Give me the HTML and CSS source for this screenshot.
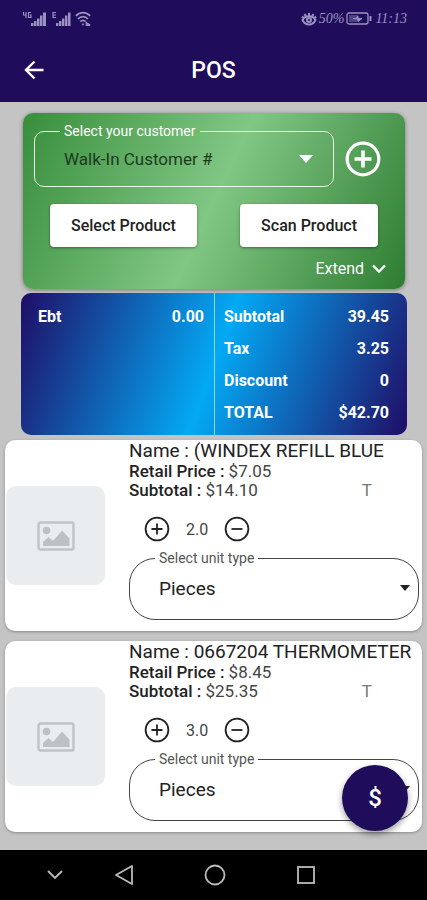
FILE: index.html
```html
<!DOCTYPE html>
<html lang="en">
<head>
<meta charset="utf-8">
<meta name="viewport" content="width=device-width, initial-scale=1">
<title>POS</title>
<link rel="stylesheet" href="styles.css">
</head>
<body>
<header class="top">
  <div class="status">
    <div class="status-group">
      <svg width="24" height="16" viewBox="0 0 24 16" fill="currentColor" aria-hidden="true"><path d="M3 1v6M.5 1v3h3M8 1.500H5.500v5H8V4H7" fill="none" stroke="currentColor" stroke-width="1.200"/><path d="M8 12h2.500v3H8zM11 10h2.500v5H11zM14 7.500h2.500V15H14zM17 4.500h2.500V15H17zM20 1.500h3V15h-3z"/></svg>
      <svg width="20" height="16" viewBox="0 0 20 16" fill="currentColor" aria-hidden="true"><path d="M5 1.500H2v5h3M2 4h3" fill="none" stroke="currentColor" stroke-width="1.200"/><path d="M5 12h2.400v3H5zM8 10h2.400v5H8zM11 7.500h2.400V15H11zM14 4.500h2.400V15H14zM17 1.500h2.500V15H17z"/></svg>
      <svg width="16" height="16" viewBox="0 0 18 18" fill="none" stroke="currentColor" stroke-width="2" aria-hidden="true"><path d="M1 5.500c4.500-5 11.500-5 16 0M3.500 9c3-3.500 8-3.500 11 0M6 12c2-2 4-2 6 0M8 15h2M12 13l5 3M12 16h5"/></svg>
    </div>
    <div class="status-group status-text">
      <svg width="16" height="16" viewBox="0 0 16 16" fill="none" stroke="currentColor" stroke-width="2" aria-hidden="true"><path d="M1.500 9c3-5 10-5 13 0-3 6-10 6-13 0zM8 2v3M3.500 3l1.500 2.500M12.500 3L11 5.500M1 5.500L2.500 7M15 5.500L13.500 7"/><circle cx="8" cy="9" r="2"/></svg>
      <span>50%</span>
      <svg width="27" height="14" viewBox="0 0 27 14" fill="none" stroke="currentColor" aria-hidden="true"><rect x="1" y="1" width="21" height="11" rx="2" stroke-width="1.300"/><rect x="3" y="3" width="9" height="7" fill="currentColor" stroke="none" opacity=".4"/><path d="M24.500 4v5" stroke-width="2"/><path d="M7 6.500h3L12 4v2.500h4L12 9.500V7z" fill="currentColor"/></svg>
      <span>11:13</span>
    </div>
  </div>
  <div class="appbar">
    <button class="icon-btn" type="button" aria-label="Back"><svg width="20" height="20" viewBox="0 0 20 20" fill="none" stroke="currentColor" stroke-width="2.400" aria-hidden="true"><path d="M19.500 10H2M10.500 1.500L2 10l8.500 8.500"/></svg></button>
    <h1>POS</h1>
  </div>
</header>

<main>
  <section class="customer">
    <div class="customer-row">
      <fieldset class="field field-light">
        <legend><label for="customer">Select your customer</label></legend>
        <div class="picker">
          <select id="customer"><option>Walk-In Customer #</option></select>
          <svg width="14" height="8" viewBox="0 0 14 8" fill="currentColor" aria-hidden="true"><path d="M0 0h14L7 8z"/></svg>
        </div>
      </fieldset>
      <button class="icon-btn" type="button" aria-label="Add customer"><svg width="36" height="36" viewBox="0 0 36 36" fill="none" stroke="currentColor" stroke-width="3.200" aria-hidden="true"><circle cx="18" cy="18" r="15.800"/><path d="M18 9.500v17M9.500 18h17" stroke-width="3.600"/></svg></button>
    </div>
    <div class="actions">
      <button class="action" type="button">Select Product</button>
      <button class="action" type="button">Scan Product</button>
    </div>
    <button class="extend" type="button">Extend <svg width="14" height="10" viewBox="0 0 14 10" fill="none" stroke="currentColor" stroke-width="2.400" aria-hidden="true"><path d="M1 1.500l6 6 6-6"/></svg></button>
  </section>

  <section class="totals">
    <dl>
      <div><dt>Ebt</dt><dd>0.00</dd></div>
    </dl>
    <dl>
      <div><dt>Subtotal</dt><dd>39.45</dd></div>
      <div><dt>Tax</dt><dd>3.25</dd></div>
      <div><dt>Discount</dt><dd>0</dd></div>
      <div><dt>TOTAL</dt><dd>$42.70</dd></div>
    </dl>
  </section>

  <article class="item">
    <div class="thumb"><svg width="38" height="30" viewBox="0 0 38 30" aria-hidden="true"><rect x="1.500" y="1.500" width="35" height="27" rx="2" fill="none" stroke="#bfc3c6" stroke-width="2.400"/><circle cx="9.500" cy="9.500" r="3.800" fill="#bdc1c4"/><path d="M6 25v-4l5.500-5 4.500 4 9-10.500 7.500 8V25z" fill="#bdc1c4"/></svg></div>
    <div class="details">
      <h2>Name : (WINDEX REFILL BLUE</h2>
      <p><b>Retail Price :</b> $7.05</p>
      <p class="split"><span><b>Subtotal :</b> $14.10</span><span class="tax">T</span></p>
      <div class="qty">
        <button class="icon-btn" type="button" aria-label="Increase"><svg width="26" height="26" viewBox="0 0 26 26" fill="none" stroke="currentColor" stroke-width="1.800" aria-hidden="true"><circle cx="13" cy="13" r="11.400"/><path d="M13 7.500v11M7.500 13h11"/></svg></button>
        <output>2.0</output>
        <button class="icon-btn" type="button" aria-label="Decrease"><svg width="26" height="26" viewBox="0 0 26 26" fill="none" stroke="currentColor" stroke-width="1.800" aria-hidden="true"><circle cx="13" cy="13" r="11.400"/><path d="M7.500 13h11"/></svg></button>
      </div>
      <fieldset class="field">
        <legend><label for="unit-1">Select unit type</label></legend>
        <div class="picker">
          <select id="unit-1"><option>Pieces</option></select>
          <svg width="10" height="6" viewBox="0 0 10 6" fill="currentColor" aria-hidden="true"><path d="M0 0h10L5 6z"/></svg>
        </div>
      </fieldset>
    </div>
  </article>

  <article class="item">
    <div class="thumb"><svg width="38" height="30" viewBox="0 0 38 30" aria-hidden="true"><rect x="1.500" y="1.500" width="35" height="27" rx="2" fill="none" stroke="#bfc3c6" stroke-width="2.400"/><circle cx="9.500" cy="9.500" r="3.800" fill="#bdc1c4"/><path d="M6 25v-4l5.500-5 4.500 4 9-10.500 7.500 8V25z" fill="#bdc1c4"/></svg></div>
    <div class="details">
      <h2>Name : 0667204 THERMOMETER</h2>
      <p><b>Retail Price :</b> $8.45</p>
      <p class="split"><span><b>Subtotal :</b> $25.35</span><span class="tax">T</span></p>
      <div class="qty">
        <button class="icon-btn" type="button" aria-label="Increase"><svg width="26" height="26" viewBox="0 0 26 26" fill="none" stroke="currentColor" stroke-width="1.800" aria-hidden="true"><circle cx="13" cy="13" r="11.400"/><path d="M13 7.500v11M7.500 13h11"/></svg></button>
        <output>3.0</output>
        <button class="icon-btn" type="button" aria-label="Decrease"><svg width="26" height="26" viewBox="0 0 26 26" fill="none" stroke="currentColor" stroke-width="1.800" aria-hidden="true"><circle cx="13" cy="13" r="11.400"/><path d="M7.500 13h11"/></svg></button>
      </div>
      <fieldset class="field">
        <legend><label for="unit-2">Select unit type</label></legend>
        <div class="picker">
          <select id="unit-2"><option>Pieces</option></select>
          <svg width="10" height="6" viewBox="0 0 10 6" fill="currentColor" aria-hidden="true"><path d="M0 0h10L5 6z"/></svg>
        </div>
      </fieldset>
    </div>
  </article>

  <button class="pay" type="button">$</button>
</main>

<nav class="system">
  <button class="icon-btn" type="button" aria-label="Hide"><svg width="18" height="20" viewBox="0 0 18 20" fill="none" stroke="currentColor" stroke-width="1.800" aria-hidden="true"><path d="M2 6l7 7 7-7"/></svg></button>
  <button class="icon-btn" type="button" aria-label="Back"><svg width="20" height="22" viewBox="0 0 20 22" fill="none" stroke="currentColor" stroke-width="1.800" stroke-linejoin="round" aria-hidden="true"><path d="M18 2v18L2 11z"/></svg></button>
  <button class="icon-btn" type="button" aria-label="Home"><svg width="22" height="22" viewBox="0 0 22 22" fill="none" stroke="currentColor" stroke-width="1.800" aria-hidden="true"><circle cx="11" cy="11" r="9.500"/></svg></button>
  <button class="icon-btn" type="button" aria-label="Recent apps"><svg width="20" height="20" viewBox="0 0 20 20" fill="none" stroke="currentColor" stroke-width="1.800" aria-hidden="true"><rect x="2" y="2" width="16" height="16"/></svg></button>
</nav>
</body>
</html>
```
FILE: styles.css
```css
* {
  box-sizing: border-box;
}

body {
  display: flex;
  flex-direction: column;
  min-height: 100vh;
  margin: 0;
  background: #c4c4c4;
  color: #222;
  font-family: Roboto, "Liberation Sans", sans-serif;
  font-size: 16px;
}

h1, h2, p, dl, dt, dd {
  margin: 0;
}

button, select {
  border: 0;
  padding: 0;
  background: none;
  color: inherit;
  font: inherit;
}

.icon-btn {
  display: flex;
}

.top {
  background: #1f0d5c;
  color: #fff;
}

.status {
  display: flex;
  justify-content: space-between;
  align-items: center;
  height: 38px;
  padding: 0 20px 0 23px;
  color: #9a92c0;
}

.status-group {
  display: flex;
  align-items: center;
  gap: 4px;
}

.status-text {
  gap: 2px;
  font: italic 14px "Liberation Serif", serif;
}

.appbar {
  display: grid;
  grid-template-columns: 1fr auto 1fr;
  align-items: center;
  height: 64px;
  padding: 0 24px;
}

h1 {
  font-size: 23px;
  font-weight: 500;
}

main {
  position: relative;
  flex: 1;
  padding: 11px 5px 18px;
}

.customer {
  display: flex;
  flex-direction: column;
  margin: 0 17px 4px 18px;
  padding: 10px 19px 10px 11px;
  border-radius: 10px;
  background: linear-gradient(115deg, #388e3c, #81c784 50%, #2e7d32);
  box-shadow: 0 1px 4px rgba(0, 0, 0, 0.4);
  color: #fff;
}

.customer-row {
  display: flex;
  gap: 11px;
  padding-right: 5px;
}

.customer-row .icon-btn {
  align-items: center;
  padding-top: 8px;
}

.field {
  flex: 1;
  min-width: 0;
  margin: 0;
  padding: 0 8px 9px 25px;
  border: 1px solid #444;
  border-radius: 26px;
}

.field legend {
  padding: 0 4px;
  color: #555;
  font-size: 14px;
  line-height: 16px;
}

.picker {
  display: grid;
  align-items: center;
}

.picker select,
.picker svg {
  grid-area: 1 / 1;
}

.picker select {
  width: 100%;
  height: 44px;
  padding-left: 4px;
  appearance: none;
  font-size: 19px;
}

.picker svg {
  justify-self: end;
  pointer-events: none;
}

.field-light {
  padding-right: 20px;
  padding-bottom: 7px;
  border: 1px solid #e8f5e9;
  border-radius: 10px;
}

.field-light legend {
  color: #fff;
}

.field-light select {
  height: 40px;
  color: #1c3a1e;
  font-size: 17px;
}

.actions {
  display: flex;
  justify-content: space-between;
  margin-top: 17px;
  padding: 0 8px 0 16px;
}

.action {
  height: 43px;
  padding: 0 21px;
  border-radius: 4px;
  background: #fff;
  box-shadow: 0 1px 3px rgba(0, 0, 0, 0.4);
  color: #222;
  font-weight: 500;
}

.extend {
  display: flex;
  align-items: center;
  align-self: flex-end;
  gap: 8px;
  margin-top: 11px;
  line-height: 21px;
}

.totals {
  display: grid;
  grid-template-columns: 1fr 1fr;
  margin: 0 15px 5px 16px;
  border-radius: 10px;
  background: linear-gradient(110deg, #1f0d66, #03a9f4 50%, #1f0d66);
  color: #fff;
  font-weight: 700;
  line-height: 32px;
}

.totals dl {
  padding: 8px 10px 6px 17px;
}

.totals dl + dl {
  padding: 8px 18px 6px 9px;
  border-left: 1px solid #8fd3f7;
}

.totals dl div {
  display: flex;
  justify-content: space-between;
}

.item {
  display: flex;
  align-items: center;
  gap: 24px;
  padding: 1px 3px 11px 1px;
  border-radius: 10px;
  background: #fff;
  box-shadow: 0 1px 3px rgba(0, 0, 0, 0.3);
}

.item + .item {
  margin-top: 10px;
}

.thumb {
  display: grid;
  place-items: center;
  flex: none;
  width: 99px;
  height: 99px;
  margin-top: 10px;
  border-radius: 10px;
  background: #e9edf0;
}

.details {
  flex: 1;
  min-width: 0;
  line-height: 19px;
}

h2 {
  padding-bottom: 2px;
  font-size: 19px;
  font-weight: 400;
  line-height: 19px;
}

p {
  color: #444;
  font-size: 17px;
}

b {
  color: #222;
  font-weight: 500;
}

.split {
  display: flex;
  justify-content: space-between;
  padding-right: 47px;
}

.tax {
  color: #777;
}

.qty {
  display: flex;
  align-items: center;
  gap: 16px;
  height: 50px;
  padding: 8px 0 0 15px;
}

.qty output {
  color: #444;
}

.pay {
  position: absolute;
  right: 19px;
  bottom: 19px;
  width: 66px;
  height: 66px;
  border-radius: 50%;
  background: #1f0d5c;
  box-shadow: 0 3px 6px rgba(0, 0, 0, 0.4);
  color: #fff;
  font-size: 24px;
  font-weight: 500;
}

.system {
  display: grid;
  grid-template-columns: 47fr 91fr 91fr 91fr;
  place-items: center;
  height: 50px;
  padding: 0 76px 0 31px;
  background: #000;
  color: #bbb;
}
```
